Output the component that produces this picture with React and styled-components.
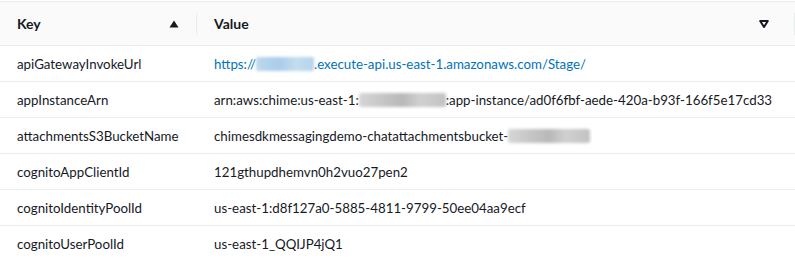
import React from "react";
import styled, { createGlobalStyle } from "styled-components";

const Global = createGlobalStyle`
  html, body { margin: 0; padding: 0; background: #ffffff; }
  body { font-family: Lato, "Noto Sans", Arial, sans-serif; color: #16191f; }
`;

const Page = styled.div`
  padding-top: 1px;
  width: 795px;
  overflow: hidden;
`;

const Grid = styled.div`
  display: grid;
  grid-template-columns: 197px 1fr;
`;

const HeadCell = styled.div`
  height: 43px;
  background: #fafafa;
  border-top: 1px solid #eaeded;
  border-bottom: 1px solid #eaeded;
  display: flex;
  align-items: center;
  position: relative;
  padding: 0 ${(p) => p.$padRight}px 0 ${(p) => p.$padLeft}px;
  font-weight: 700;
  font-size: 14px;
  color: #16191f;
`;

const HeadLabel = styled.span`
  flex: 1;
`;

const Divider = styled.span`
  position: absolute;
  right: 0;
  top: 11px;
  width: 1px;
  height: 22px;
  background: #eaeded;
`;

const Cell = styled.div`
  height: 35px;
  border-bottom: 1px solid #eaeded;
  display: flex;
  align-items: center;
  padding-left: ${(p) => p.$padLeft}px;
  font-size: 13.3px;
  font-variant-numeric: tabular-nums;
  white-space: nowrap;
  overflow: hidden;
  color: ${(p) => (p.$link ? "#0073bb" : "#16191f")};
`;

const Blur = styled.span`
  display: inline-block;
  flex: none;
  width: ${(p) => p.$w}px;
  height: 14px;
  border-radius: 2px;
  filter: blur(1.5px);
  background: ${(p) =>
    p.$link
      ? "linear-gradient(90deg, #bcd8ee, #a9cde9 40%, #c4dcef 70%, #b3d3ec)"
      : "linear-gradient(90deg, #d6d6d6, #c4c4c4 30%, #b8b8b8 50%, #d0d0d0 70%, #c2c2c2)"};
`;

const SortUp = () => (
  <svg width="10" height="8" viewBox="0 0 10 8">
    <path d="M5 0.5 L9.5 7.5 L0.5 7.5 Z" fill="#16191f" />
  </svg>
);

const SortDown = () => (
  <svg width="10" height="8" viewBox="0 0 10 8">
    <path d="M1.2 1 L8.8 1 L5 7 Z" fill="none" stroke="#16191f" strokeWidth="2" strokeLinejoin="round" />
  </svg>
);

const rows = [
  { k: "apiGatewayInvokeUrl", link: true, v: ["https://", { blur: 58 }, ".execute-api.us-east-1.amazonaws.com/Stage/"] },
  { k: "appInstanceArn", v: ["arn:aws:chime:us-east-1:", { blur: 87 }, ":app-instance/ad0f6fbf-aede-420a-b93f-166f5e17cd33"] },
  { k: "attachmentsS3BucketName", v: ["chimesdkmessagingdemo-chatattachmentsbucket-", { blur: 82 }] },
  { k: "cognitoAppClientId", v: ["121gthupdhemvn0h2vuo27pen2"] },
  { k: "cognitoIdentityPoolId", v: ["us-east-1:d8f127a0-5885-4811-9799-50ee04aa9ecf"] },
  { k: "cognitoUserPoolId", v: ["us-east-1_QQIJP4jQ1"] },
];

export default function App() {
  return (
    <Page>
      <Global />
      <Grid>
        <HeadCell $padLeft={17} $padRight={18}>
          <HeadLabel>Key</HeadLabel>
          <SortUp />
          <Divider />
        </HeadCell>
        <HeadCell $padLeft={17} $padRight={26}>
          <HeadLabel>Value</HeadLabel>
          <SortDown />
          <Divider />
        </HeadCell>
        {rows.map((r) => (
          <React.Fragment key={r.k}>
            <Cell $padLeft={17}>{r.k}</Cell>
            <Cell $padLeft={17} $link={r.link}>
              {r.v.map((part, i) =>
                typeof part === "string" ? (
                  <span key={i}>{part}</span>
                ) : (
                  <Blur key={i} $w={part.blur} $link={r.link} />
                )
              )}
            </Cell>
          </React.Fragment>
        ))}
      </Grid>
    </Page>
  );
}
